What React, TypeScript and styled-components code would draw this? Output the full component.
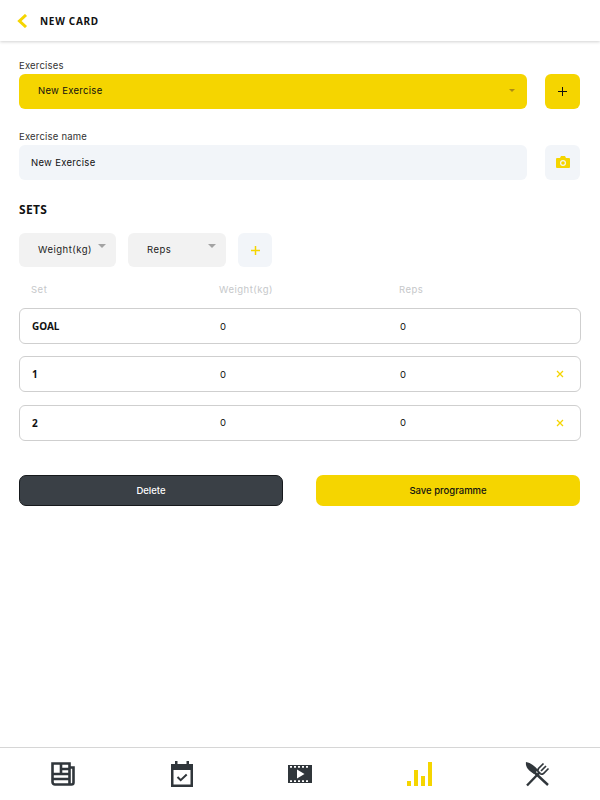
import React from 'react';
import styled, { createGlobalStyle } from 'styled-components';

const YELLOW = '#f5d500';
const DARK = '#3a4046';
const ICON_DARK = '#30363b';
const BODY_FONT = '"Inter", "Liberation Sans", sans-serif';
const HEAD_FONT = '"Noto Sans", "Liberation Sans", sans-serif';

const GlobalStyle = createGlobalStyle`
  html, body {
    margin: 0;
    padding: 0;
    background: #fff;
  }
  * {
    box-sizing: border-box;
  }
`;

const Page = styled.div`
  width: 600px;
  height: 800px;
  display: flex;
  flex-direction: column;
  font-family: ${BODY_FONT};
  color: #111;
  overflow: hidden;
`;

const Header = styled.header`
  height: 41px;
  flex-shrink: 0;
  display: flex;
  align-items: center;
  gap: 12px;
  padding-left: 17px;
  box-shadow: 0 1px 3px rgba(0, 0, 0, 0.18);
`;

const HeaderTitle = styled.h1`
  margin: 0;
  font-family: ${HEAD_FONT};
  font-size: 10px;
  font-weight: 700;
  letter-spacing: 0.7px;
`;

const Content = styled.main`
  flex: 1;
  padding: 17px 19px 0;
`;

const Field = styled.section<{ $gap: number }>`
  margin-bottom: ${({ $gap }) => $gap}px;
`;

const FieldLabel = styled.div`
  font-size: 9.5px;
  line-height: 16px;
  color: #333;
  letter-spacing: 0.2px;
`;

const FieldRow = styled.div`
  display: flex;
  justify-content: space-between;
  align-items: center;
`;

const MainSelect = styled.div`
  width: 508px;
  height: 34.5px;
  background: ${YELLOW};
  border-radius: 6px;
  padding: 0 12px 1px 19px;
  display: flex;
  align-items: center;
  justify-content: space-between;
  font-size: 9.5px;
  letter-spacing: 0.3px;
`;

const NameInput = styled.div`
  width: 508px;
  height: 34.5px;
  background: #f2f5f9;
  border-radius: 6px;
  padding: 1px 0 0 12px;
  display: flex;
  align-items: center;
  font-size: 9.5px;
  letter-spacing: 0.3px;
`;

const Caret = styled.span<{ $color: string; $size: number }>`
  width: 0;
  height: 0;
  border-left: ${({ $size }) => $size}px solid transparent;
  border-right: ${({ $size }) => $size}px solid transparent;
  border-top: ${({ $size }) => $size}px solid ${({ $color }) => $color};
`;

const IconButton = styled.div<{ $yellow?: boolean }>`
  width: 35px;
  height: 34.5px;
  border-radius: 6px;
  margin-right: 1px;
  background: ${({ $yellow }) => ($yellow ? YELLOW : '#f2f5f9')};
  display: flex;
  align-items: center;
  justify-content: center;
  flex-shrink: 0;
`;

const SectionTitle = styled.h2`
  margin: 0 0 15px;
  font-family: ${HEAD_FONT};
  font-size: 12px;
  line-height: 16px;
  font-weight: 700;
  letter-spacing: 0.3px;
`;

const Filters = styled.div`
  display: flex;
  gap: 12px;
`;

const FilterSelect = styled.div<{ $width: number }>`
  width: ${({ $width }) => $width}px;
  height: 34px;
  background: #f2f2f2;
  border-radius: 6px;
  padding: 0 10px 1px 19px;
  display: flex;
  align-items: center;
  justify-content: space-between;
  font-size: 9.5px;
  letter-spacing: 0.5px;
  color: #222;

  ${Caret} {
    margin-bottom: 7px;
  }
`;

const AddColumn = styled(IconButton)`
  width: 34px;
  height: 34px;
  margin-right: 0;
`;

const Grid = styled.div`
  display: grid;
  grid-template-columns: 188px 180px 1fr 40px;
  align-items: center;
`;

const TableHead = styled(Grid)`
  height: 41px;
  padding: 3px 0 0 12px;
  font-size: 9.5px;
  letter-spacing: 0.5px;
  color: #c6c8ca;
`;

const Row = styled(Grid)`
  height: 36px;
  margin-bottom: 12.25px;
  padding-left: 12px;
  border: 1px solid #cfcfcf;
  border-radius: 6px;
  font-size: 9.5px;
`;

const RowName = styled.div`
  font-family: ${HEAD_FONT};
  font-size: 10px;
  font-weight: 700;
`;

const RemoveMark = styled.div`
  display: flex;
  align-items: center;
  padding-left: 16px;
`;

const Actions = styled.div`
  display: flex;
  justify-content: space-between;
  margin: 34.5px 1px 0 0;
`;

const ActionButton = styled.button<{ $dark?: boolean }>`
  width: 264px;
  height: 31px;
  padding: 0;
  border: ${({ $dark }) => ($dark ? '1px solid #16191c' : 'none')};
  border-radius: 7px;
  background: ${({ $dark }) => ($dark ? DARK : YELLOW)};
  color: ${({ $dark }) => ($dark ? '#fff' : '#111')};
  font-family: ${BODY_FONT};
  font-size: 9.5px;
  font-weight: 500;
`;

const BottomNav = styled.nav`
  height: 53px;
  flex-shrink: 0;
  border-top: 1px solid #d6d6d6;
  display: flex;
  align-items: center;
  justify-content: space-between;
  padding: 0 50px;
`;

const Glyph = styled.svg`
  width: 26px;
  height: 26px;
  display: block;
`;

const Plus: React.FC<{ color: string; weight: number }> = ({ color, weight }) => (
  <svg width="11" height="11" viewBox="0 0 11 11">
    <path d="M5.5 1v9M1 5.5h9" stroke={color} strokeWidth={weight} fill="none" />
  </svg>
);

const Cross = () => (
  <svg width="8" height="8" viewBox="0 0 8 8">
    <path d="M1 1l6 6M7 1L1 7" stroke={YELLOW} strokeWidth="1.3" fill="none" />
  </svg>
);

const BackIcon = () => (
  <svg width="11" height="14" viewBox="0 0 11 14">
    <path d="M9 1L2.5 7 9 13" stroke={YELLOW} strokeWidth="3" fill="none" />
  </svg>
);

const CameraIcon = () => (
  <svg width="14" height="12" viewBox="0 0 14 12">
    <path
      fillRule="evenodd"
      fill={YELLOW}
      d="M1 2h3l1-2h4l1 2h3a1 1 0 0 1 1 1v8a1 1 0 0 1-1 1H1a1 1 0 0 1-1-1V3a1 1 0 0 1 1-1zm6 2a3 3 0 1 0 0 6 3 3 0 0 0 0-6zm0 1.2a1.8 1.8 0 1 1 0 3.6 1.8 1.8 0 0 1 0-3.6z"
    />
  </svg>
);

const NewsIcon = () => (
  <Glyph viewBox="0 0 26 26">
    <path
      d="M2.500 2.500h17v21H5a2.500 2.500 0 0 1-2.500-2.500zM19.500 6.500h4v15a2 2 0 0 1-2 2h-2M2.500 13h17M2.500 18h17M11 2.500V13M11 8h8.500"
      fill="none"
      stroke={ICON_DARK}
      strokeWidth="2.600"
    />
  </Glyph>
);

const CalendarIcon = () => (
  <Glyph viewBox="0 0 26 26">
    <path fill={ICON_DARK} d="M6 0h2.500v3h9V0H20v3h4v23H2V3h4zM4.500 9v14.500h17V9z" />
    <path d="M8.500 16l3.200 3.200 6-5.700" fill="none" stroke={ICON_DARK} strokeWidth="2" />
  </Glyph>
);

const VideoIcon = () => (
  <Glyph viewBox="0 0 26 26">
    <path
      fillRule="evenodd"
      fill={ICON_DARK}
      d="M1 4h24v18H1zM3 5v1.800h2V5zm4 0v1.800h2V5zm4 0v1.800h2V5zm4 0v1.800h2V5zm4 0v1.800h2V5zM3 19.200V21h2v-1.800zm4 0V21h2v-1.800zm4 0V21h2v-1.800zm4 0V21h2v-1.800zm4 0V21h2v-1.800zM10 8.500v9l7.500-4.500z"
    />
  </Glyph>
);

const StatsIcon = () => (
  <Glyph viewBox="0 0 26 26">
    <path
      fill={YELLOW}
      d="M1 20h4v5H1zM8 9h4v16H8zM15 15h4v10h-4zM22 1h4v24h-4z"
    />
  </Glyph>
);

const FoodIcon = () => (
  <Glyph viewBox="0 0 26 26">
    <path d="M9 10l15 14" stroke={ICON_DARK} strokeWidth="2.400" fill="none" />
    <path fill={ICON_DARK} d="M2 1c5 1 9 4 12 8l-4 4C5 10 1 6 2 1z" />
    <path d="M3 24.500L16 11" stroke={ICON_DARK} strokeWidth="2.400" fill="none" />
    <path
      d="M19.500 2.500L14.500 7.500C13.500 9 14 11 15 12s3 1.500 4.500.5L24.500 7.500M22 5l-5 5"
      stroke={ICON_DARK}
      strokeWidth="1.700"
      fill="none"
    />
  </Glyph>
);

const sets = ['1', '2'];

const App: React.FC = () => {
  return (
    <Page>
      <GlobalStyle />
      <Header>
        <BackIcon />
        <HeaderTitle>NEW CARD</HeaderTitle>
      </Header>
      <Content>
        <Field $gap={20.5}>
          <FieldLabel>Exercises</FieldLabel>
          <FieldRow>
            <MainSelect>
              New Exercise
              <Caret $color="#ad8c14" $size={3} />
            </MainSelect>
            <IconButton $yellow>
              <Plus color="#111" weight={1} />
            </IconButton>
          </FieldRow>
        </Field>
        <Field $gap={22.5}>
          <FieldLabel>Exercise name</FieldLabel>
          <FieldRow>
            <NameInput>New Exercise</NameInput>
            <IconButton>
              <CameraIcon />
            </IconButton>
          </FieldRow>
        </Field>
        <SectionTitle>SETS</SectionTitle>
        <Filters>
          <FilterSelect $width={97}>
            Weight(kg)
            <Caret $color="#a3a3a3" $size={4} />
          </FilterSelect>
          <FilterSelect $width={98}>
            Reps
            <Caret $color="#a3a3a3" $size={4} />
          </FilterSelect>
          <AddColumn>
            <Plus color={YELLOW} weight={1.5} />
          </AddColumn>
        </Filters>
        <TableHead>
          <span>Set</span>
          <span>Weight(kg)</span>
          <span>Reps</span>
        </TableHead>
        <Row>
          <RowName>GOAL</RowName>
          <span>0</span>
          <span>0</span>
        </Row>
        {sets.map((set) => (
          <Row key={set}>
            <RowName>{set}</RowName>
            <span>0</span>
            <span>0</span>
            <RemoveMark>
              <Cross />
            </RemoveMark>
          </Row>
        ))}
        <Actions>
          <ActionButton $dark>Delete</ActionButton>
          <ActionButton>Save programme</ActionButton>
        </Actions>
      </Content>
      <BottomNav>
        <NewsIcon />
        <CalendarIcon />
        <VideoIcon />
        <StatsIcon />
        <FoodIcon />
      </BottomNav>
    </Page>
  );
};

export default App;
